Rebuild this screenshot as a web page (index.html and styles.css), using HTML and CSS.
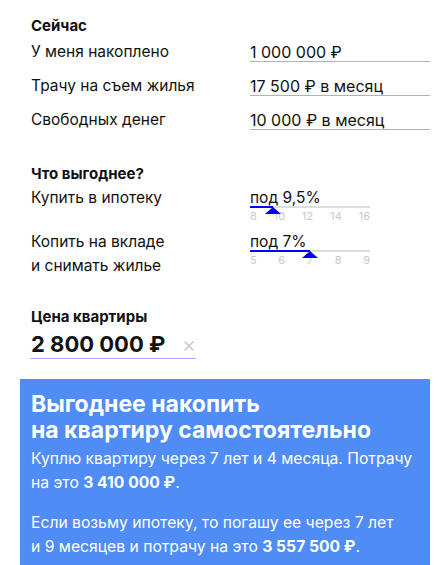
FILE: index.html
```html
<!DOCTYPE html>
<html lang="ru">
<head>
<meta charset="utf-8">
<link rel="stylesheet" href="styles.css">
</head>
<body>
<div class="page">
  <section class="now">
    <h2 class="title">Сейчас</h2>
    <div class="row">
      <div class="label">У меня накоплено</div>
      <div class="field">1 000 000 ₽</div>
    </div>
    <div class="row">
      <div class="label">Трачу на съем жилья</div>
      <div class="field">17 500 ₽ в месяц</div>
    </div>
    <div class="row">
      <div class="label">Свободных денег</div>
      <div class="field">10 000 ₽ в месяц</div>
    </div>
  </section>

  <section class="compare">
    <h2 class="title">Что выгоднее?</h2>
    <div class="srow">
      <div class="label">Купить в ипотеку</div>
      <div class="slider">
        <div class="sval">под 9,5%</div>
        <div class="track"><div class="fill" style="width:23px"></div><div class="thumb" style="left:23px"></div></div>
        <div class="ticks"><span>8</span><span>10</span><span>12</span><span>14</span><span>16</span></div>
      </div>
    </div>
    <div class="srow">
      <div class="label">Копить на вкладе<br>и снимать жилье</div>
      <div class="slider">
        <div class="sval">под 7%</div>
        <div class="track"><div class="fill" style="width:60px"></div><div class="thumb" style="left:60px"></div></div>
        <div class="ticks"><span>5</span><span>6</span><span>7</span><span>8</span><span>9</span></div>
      </div>
    </div>
  </section>

  <section class="price">
    <h2 class="title">Цена квартиры</h2>
    <div class="pricefield">
      <span class="pval">2 800 000 ₽</span>
      <span class="clear">×</span>
    </div>
  </section>

  <section class="result">
    <h1 class="rtitle">Выгоднее накопить<br>на квартиру самостоятельно</h1>
    <p class="rtext">Куплю квартиру через 7 лет и 4 месяца. Потрачу<br>на это <b>3 410 000 ₽</b>.</p>
    <p class="rtext">Если возьму ипотеку, то погашу ее через 7 лет<br>и 9 месяцев и потрачу на это <b>3 557 500 ₽</b>.</p>
  </section>
</div>
</body>
</html>
```

FILE: styles.css
```css
* { box-sizing: border-box; }
html, body { margin: 0; padding: 0; background: #fff; }
body {
  font-family: "Inter", "Roboto", "Liberation Sans", sans-serif;
  font-size: 15.5px;
  color: #111;
  height: 565px;
  overflow: hidden;
}
.page { padding-top: 16px; }
section { padding-left: 31px; }
.title {
  margin: 0;
  font-size: 15px;
  line-height: 20px;
  font-weight: 700;
}
.row {
  display: flex;
  margin-top: 15px;
}
.now .row:first-of-type { margin-top: 7px; }
.label {
  width: 219px;
  line-height: 18px;
  white-space: nowrap;
}
.field {
  width: 180px;
  font-size: 16px;
  line-height: 18px;
  border-bottom: 1px solid #a9a9ff;
  white-space: nowrap;
}
.compare { margin-top: 34px; }
.srow {
  display: flex;
  margin-top: 2px;
}
.srow + .srow { margin-top: 7px; }
.srow .label { line-height: 24px; }
.slider { width: 120px; padding-top: 3px; }
.sval { line-height: 17px; white-space: nowrap; }
.track {
  position: relative;
  height: 2px;
  background: #ddd;
}
.fill { height: 2px; background: #0000ff; }
.thumb {
  position: absolute;
  top: 1px;
  width: 0; height: 0;
  margin-left: -8px;
  border-left: 8px solid transparent;
  border-right: 8px solid transparent;
  border-bottom: 7px solid #0000ee;
}
.ticks {
  display: flex;
  justify-content: space-between;
  font-size: 11px;
  line-height: 14px;
  color: #c8c8c8;
  margin-top: 1px;
}
.price { margin-top: 29px; }
.pricefield {
  display: flex;
  align-items: center;
  justify-content: space-between;
  width: 166px;
  margin-top: 4px;
  margin-left: -1px;
  padding-left: 1px;
  border-bottom: 1px solid #a9a9ff;
  height: 28px;
}
.pval { font-size: 22px; font-weight: 700; line-height: 27px; }
.clear { color: #c8c8c8; font-size: 22px; line-height: 27px; font-weight: 300; }
.result {
  margin: 20px 11px 0 20px;
  padding: 12px 0 0 11px;
  background: #4f8cf6;
  color: #fff;
  height: 200px;
}
.rtitle {
  margin: 0;
  font-size: 23px;
  line-height: 26px;
  font-weight: 700;
  white-space: nowrap;
}
.rtext {
  margin: 4px 0 16px;
  line-height: 24px;
  font-size: 15.7px;
  white-space: nowrap;
}
.rtext b { font-weight: 700; }
```
